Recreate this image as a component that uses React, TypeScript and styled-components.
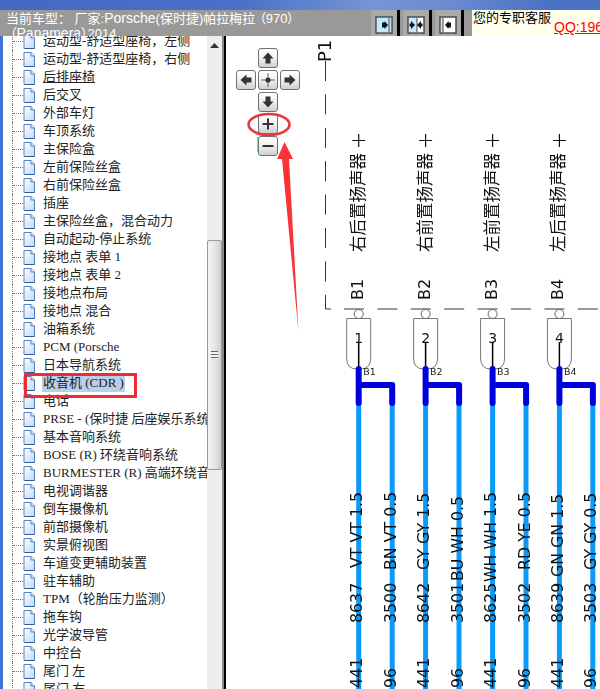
import React from "react";
import styled, { createGlobalStyle } from "styled-components";

const Global = createGlobalStyle`
  html, body { margin: 0; padding: 0; background: #fff; }
  #root { width: 600px; height: 689px; }
`;

const Page = styled.div`
  position: relative;
  width: 600px;
  height: 689px;
  overflow: hidden;
  display: flex;
  flex-direction: column;
  font-family: "Liberation Sans", "Noto Sans CJK SC", sans-serif;
`;

const TitleBar = styled.div`
  height: 10px;
  flex: none;
  background: linear-gradient(90deg, #4469c4 0%, #4a70c8 40%, #7595d4 62%, #6a8bd0 75%, #4a70c2 92%, #4b73c4 100%);
`;

const Toolbar = styled.div`
  position: relative;
  z-index: 2;
  height: 26px;
  flex: none;
  display: flex;
  background: #999;
  overflow: hidden;
`;

const CarInfo = styled.div`
  width: 371px;
  flex: none;
  padding: 1px 0 0 6px;
  box-sizing: border-box;
  color: #fff;
  font-size: 13px;
  line-height: 15px;
  white-space: nowrap;
`;

const InfoLine = styled.div`
  height: 15px;
`;

const Latin = styled.span`
  font-size: 14px;
`;

const Tight = styled.span`
  font-feature-settings: "palt";
  margin-left: 4px;
`;

const PaneButtons = styled.div`
  display: flex;
  gap: 3px;
  width: 101px;
  height: 26px;
  flex: none;
`;

const PaneButton = styled.div`
  width: 29px;
  height: 26px;
  box-sizing: border-box;
  display: flex;
  align-items: center;
  justify-content: center;
  background: #aaa;
  border-right: 3px solid #000;
  padding-top: 3px;
`;

const Service = styled.div`
  flex: 1;
  display: flex;
  gap: 3px;
  padding-left: 1px;
  background: #ffffee;
  white-space: nowrap;
  overflow: hidden;
`;

const ServiceLabel = styled.span`
  font-size: 13px;
  line-height: 16px;
  color: #000;
`;

const QQ = styled.span`
  font-size: 14px;
  line-height: 16px;
  margin-top: 9px;
  color: #f00;
  text-decoration: underline;
`;

const Main = styled.div`
  flex: 1;
  min-height: 0;
  display: flex;
`;

const Tree = styled.div`
  width: 226px;
  flex: none;
  display: flex;
  box-sizing: border-box;
  border-left: 3px solid #3f74d2;
  border-right: 2px solid #000;
  overflow: hidden;
`;

const TreeList = styled.div`
  width: 204px;
  flex: none;
  margin-top: -4px;
  padding-left: 9px;
  box-sizing: border-box;
  white-space: nowrap;
  overflow: hidden;
`;

const TreeRow = styled.div`
  height: 18px;
  display: flex;
  align-items: center;
  border-left: 1px dotted #777;
  font-family: "Liberation Serif", "Noto Sans CJK SC", serif;
  font-size: 13px;
  line-height: 18px;
  color: #222;
`;

const Twig = styled.span`
  width: 10px;
  flex: none;
  border-top: 1px dotted #777;
`;

const RowLabel = styled.span<{ $underline?: boolean; $selected?: boolean }>`
  margin-left: 7px;
  padding: 0 1px;
  text-decoration: ${(p) => (p.$underline ? "underline" : "none")};
  background: ${(p) => (p.$selected ? "#b9cfe9" : "transparent")};
`;

const ScrollTrack = styled.div`
  width: 15px;
  flex: none;
  display: flex;
  flex-direction: column;
  background: #eeeeee;
  border-right: 2px solid #888;
`;

const ScrollUp = styled.div`
  height: 204px;
  flex: none;
  display: flex;
  justify-content: center;
  padding-top: 7px;
  box-sizing: border-box;
`;

const ScrollThumb = styled.div`
  height: 230px;
  flex: none;
  box-sizing: border-box;
  border: 1px solid #999;
  border-radius: 2px;
  background: linear-gradient(90deg, #f2f2f2 0%, #e8e8e8 45%, #cfcfcf 100%);
  display: flex;
  align-items: center;
  justify-content: center;
`;

const Grip = styled.div`
  width: 7px;
  height: 8px;
  background: repeating-linear-gradient(180deg, #666 0 1px, #f4f4f4 1px 3px);
`;

const Canvas = styled.div`
  position: relative;
  flex: 1;
  min-width: 0;
  background: #fff;
`;

const Diagram = styled.svg`
  display: block;
  filter: blur(0.35px);
`;

const NavPad = styled.div`
  position: absolute;
  left: 10px;
  top: 12px;
  display: grid;
  grid-template-columns: repeat(3, 20px);
  grid-auto-rows: 20px;
  gap: 2px;
`;

const NavButton = styled.div<{ $col: number; $row: number }>`
  grid-column: ${(p) => p.$col};
  grid-row: ${(p) => p.$row};
  box-sizing: border-box;
  border: 1px solid #6c7378;
  border-radius: 3px;
  background: linear-gradient(180deg, #ffffff 0%, #f0f0f0 50%, #cfcfcf 100%);
  display: flex;
  align-items: center;
  justify-content: center;
`;

const Annotations = styled.svg`
  position: absolute;
  left: 0;
  top: 0;
  z-index: 3;
  pointer-events: none;
`;

const rows: { t: string; u?: boolean; s?: boolean }[] = [
  { t: "运动型-舒适型座椅，左侧" },
  { t: "运动型-舒适型座椅，右侧" },
  { t: "后排座椅", u: true },
  { t: "后交叉" },
  { t: "外部车灯" },
  { t: "车顶系统" },
  { t: "主保险盒" },
  { t: "左前保险丝盒" },
  { t: "右前保险丝盒" },
  { t: "插座" },
  { t: "主保险丝盒，混合动力" },
  { t: "自动起动-停止系统" },
  { t: "接地点 表单 1" },
  { t: "接地点 表单 2" },
  { t: "接地点布局" },
  { t: "接地点 混合" },
  { t: "油箱系统" },
  { t: "PCM (Porsche" },
  { t: "日本导航系统" },
  { t: "收音机 (CDR )", s: true },
  { t: "电话" },
  { t: "PRSE - (保时捷 后座娱乐系统" },
  { t: "基本音响系统" },
  { t: "BOSE (R) 环绕音响系统" },
  { t: "BURMESTER (R) 高端环绕音响" },
  { t: "电视调谐器" },
  { t: "倒车摄像机" },
  { t: "前部摄像机" },
  { t: "实景俯视图" },
  { t: "车道变更辅助装置" },
  { t: "驻车辅助" },
  { t: "TPM（轮胎压力监测）" },
  { t: "拖车钩" },
  { t: "光学波导管" },
  { t: "中控台" },
  { t: "尾门 左" },
  { t: "尾门 右" },
];

const DocIcon = () => (
  <svg width="12" height="15" viewBox="0 0 12 15" style={{ flex: "none" }}>
    <defs>
      <linearGradient id="doc" x1="0" y1="0" x2="1" y2="1">
        <stop offset="0" stopColor="#ffffff" />
        <stop offset="1" stopColor="#bcd8f6" />
      </linearGradient>
    </defs>
    <path d="M1 .5H8L11.5 4V14.5H1Z" fill="url(#doc)" stroke="#5a7fb8" />
    <path d="M8 .5V4H11.5" fill="#dbe8f8" stroke="#5a7fb8" />
    <path d="M2 14.5H11.5" stroke="#2f5a9c" />
  </svg>
);

const PaneIcon = ({ split, dir }: { split: "full" | "half" | "none"; dir: "r" | "l" | "both" }) => (
  <svg width="18" height="18" viewBox="0 0 18 18">
    <rect x="1" y="1" width="16" height="16" fill="#fff" stroke="#444" strokeWidth="1.4" />
    {split === "full" && <rect x="2" y="2" width="14" height="14" fill="#bfeaff" />}
    {split === "half" && <rect x="2" y="2" width="8" height="14" fill="#bfeaff" />}
    {split === "none" && <rect x="2" y="2" width="2" height="14" fill="#bfeaff" />}
    {split === "half" && <path d="M10 2V16" stroke="#444" />}
    {split === "full" && <path d="M14 2V16" stroke="#444" />}
    {split === "none" && <path d="M4 2V16" stroke="#444" />}
    {(dir === "r" || dir === "both") && <path d={dir === "r" ? "M7 6.5H9.5V5L13 9L9.5 13V11.5H7Z" : "M2.5 7.5H4V5L8 9L4 13V10.5H2.5Z"} fill="#111" />}
    {(dir === "l" || dir === "both") && <path d={dir === "l" ? "M12 6.5H9.5V5L6 9L9.5 13V11.5H12Z" : "M15.5 7.5H14V5L10 9L14 13V10.5H15.5Z"} fill="#111" />}
  </svg>
);

const Arrow = ({ rot }: { rot: number }) => (
  <svg width="14" height="14" viewBox="0 0 14 14">
    <path d="M7 1.5L12.5 7.5H9.5V12.5H4.5V7.5H1.5Z" fill="#333" transform={`rotate(${rot} 7 7)`} />
  </svg>
);

const CenterIcon = () => (
  <svg width="16" height="16" viewBox="0 0 16 16">
    <path d="M8 1V15M1 8H15" stroke="#666" strokeWidth="1" />
    <circle cx="8" cy="8" r="2.6" fill="#333" />
  </svg>
);

const Sign = ({ plus }: { plus?: boolean }) => (
  <svg width="14" height="14" viewBox="0 0 14 14">
    <path d={plus ? "M7 1.5V12.5M1.5 7H12.5" : "M1.5 7H12.5"} stroke="#333" strokeWidth="2" />
  </svg>
);

const speakers = [
  { x: 358.7, name: "右后置扬声器", b: "B1", n: "1" },
  { x: 425.6, name: "右前置扬声器", b: "B2", n: "2" },
  { x: 492.6, name: "左前置扬声器", b: "B3", n: "3" },
  { x: 559.4, name: "左后置扬声器", b: "B4", n: "4" },
];

const wires = [
  { x: 358.7, code: "8637", spec: "VT VT 1.5", specY: 568, tail: "0.441" },
  { x: 392.2, code: "3500", spec: "BN VT 0.5", specY: 570, tail: "0.96" },
  { x: 425.6, code: "8642", spec: "GY GY 1.5", specY: 570, tail: "0.441" },
  { x: 459.0, code: "3501", spec: "BU WH 0.5", specY: 581, tail: "0.96" },
  { x: 492.6, code: "8625", spec: "WH WH 1.5", specY: 582, tail: "0.441" },
  { x: 526.0, code: "3502", spec: "RD YE 0.5", specY: 570, tail: "0.96" },
  { x: 559.4, code: "8639", spec: "GN GN 1.5", specY: 577, tail: "0.441" },
  { x: 592.8, code: "3503", spec: "GY GY 0.5", specY: 570, tail: "0.96" },
];

const sans = "DejaVu Sans, sans-serif";

const Vert = ({ x, y, size, children }: { x: number; y: number; size: number; children: React.ReactNode }) => (
  <text
    transform={`translate(${x} ${y}) rotate(-90)`}
    fontFamily={`DejaVu Sans, "Noto Sans CJK SC", sans-serif`}
    fontSize={size}
    fill="#111"
  >
    {children}
  </text>
);

export default function App() {
  return (
    <Page>
      <Global />
      <TitleBar />
      <Toolbar>
        <CarInfo>
          <InfoLine>当前车型： 厂家:<Latin>Porsche</Latin>(保时捷)帕拉梅拉<Tight>（970）</Tight></InfoLine>
          <InfoLine><Tight>（<Latin>Panamera</Latin>）2014</Tight></InfoLine>
        </CarInfo>
        <PaneButtons>
          <PaneButton><PaneIcon split="full" dir="r" /></PaneButton>
          <PaneButton><PaneIcon split="half" dir="both" /></PaneButton>
          <PaneButton><PaneIcon split="none" dir="l" /></PaneButton>
        </PaneButtons>
        <Service>
          <ServiceLabel>您的专职客服</ServiceLabel>
          <QQ>QQ:1967</QQ>
        </Service>
      </Toolbar>
      <Main>
        <Tree>
          <TreeList>
            {rows.map((r) => (
              <TreeRow key={r.t}>
                <Twig />
                <DocIcon />
                <RowLabel $underline={r.u} $selected={r.s}>{r.t}</RowLabel>
              </TreeRow>
            ))}
          </TreeList>
          <ScrollTrack>
            <ScrollUp>
              <svg width="9" height="5" viewBox="0 0 9 5"><path d="M4.5 0L9 5H0Z" fill="#333" /></svg>
            </ScrollUp>
            <ScrollThumb><Grip /></ScrollThumb>
          </ScrollTrack>
        </Tree>
        <Canvas>
          <Diagram width="374" height="653" viewBox="226 36 374 653">
            <path d="M325.5 61V295" fill="none" stroke="#333" strokeWidth="1" strokeDasharray="20 13.4" />
            <path d="M325.5 295V309H331" fill="none" stroke="#333" strokeWidth="1" />
            <path d="M344 309H600" fill="none" stroke="#333" strokeWidth="1" strokeDasharray="20 13.4" />
            <Vert x={331} y={62} size={18}>P1</Vert>
            {speakers.map((s) => (
              <g key={s.b}>
                <Vert x={s.x + 5} y={252} size={16.5}>{s.name}</Vert>
                <path d={`M${s.x} 134V147M${s.x - 6.5} 140.5H${s.x + 6.5}`} stroke="#111" strokeWidth="1.2" />
                <Vert x={s.x + 4} y={300} size={16}>{s.b}</Vert>
                <circle cx={s.x} cy={314} r={4.5} fill="#fff" stroke="#666" />
                <path
                  d={`M${s.x - 12} 318.5H${s.x + 12}V358Q${s.x + 12} 369 ${s.x + 2} 369H${s.x - 2}Q${s.x - 12} 369 ${s.x - 12} 358Z`}
                  fill="#fff"
                  stroke="#777"
                />
                <text x={s.x} y={343} fontFamily={sans} fontSize={14} textAnchor="middle" fill="#111">{s.n}</text>
                <path d={`M${s.x} 342V368`} stroke="#000" strokeWidth="1.5" />
              </g>
            ))}
            {wires.map((w) => (
              <rect key={w.code} x={w.x - 2.5} y={402} width={5} height={287} fill="#0a9bfa" />
            ))}
            {speakers.map((s) => (
              <g key={`${s.b}-wire`}>
                <path
                  d={`M${s.x} 369V403M${s.x} 385H${s.x + 33.5}V403`}
                  fill="none"
                  stroke="#0000dc"
                  strokeWidth="6"
                  strokeLinejoin="round"
                  strokeLinecap="round"
                />
                <text x={s.x + 4.5} y={375} fontFamily={sans} fontSize={9.5} fill="#222">{s.b}</text>
              </g>
            ))}
            {wires.map((w) => (
              <g key={`${w.code}-t`}>
                <Vert x={w.x + 3.5} y={623} size={15.8}>{w.code}</Vert>
                <Vert x={w.x + 3.5} y={w.specY} size={15.8}>{w.spec}</Vert>
                <Vert x={w.x + 3.5} y={703} size={15.8}>{w.tail}</Vert>
              </g>
            ))}
          </Diagram>
          <NavPad>
            <NavButton $col={2} $row={1}><Arrow rot={0} /></NavButton>
            <NavButton $col={1} $row={2}><Arrow rot={-90} /></NavButton>
            <NavButton $col={2} $row={2}><CenterIcon /></NavButton>
            <NavButton $col={3} $row={2}><Arrow rot={90} /></NavButton>
            <NavButton $col={2} $row={3}><Arrow rot={180} /></NavButton>
            <NavButton $col={2} $row={4}><Sign plus /></NavButton>
            <NavButton $col={2} $row={5}><Sign /></NavButton>
          </NavPad>
        </Canvas>
      </Main>
      <Annotations width="600" height="689" viewBox="0 0 600 689">
        <rect x="25.5" y="374.5" width="110" height="22" fill="none" stroke="#ee2a33" strokeWidth="3" />
        <ellipse cx="269" cy="124.5" rx="20.5" ry="10.5" fill="none" stroke="#e8383c" strokeWidth="2.6" />
        <path d="M284.5 142L293 159H289L298.5 332L282 159H277Z" fill="#fb3336" />
        <path d="M258 137V152" stroke="#3c9a4a" strokeWidth="1" />
      </Annotations>
    </Page>
  );
}
